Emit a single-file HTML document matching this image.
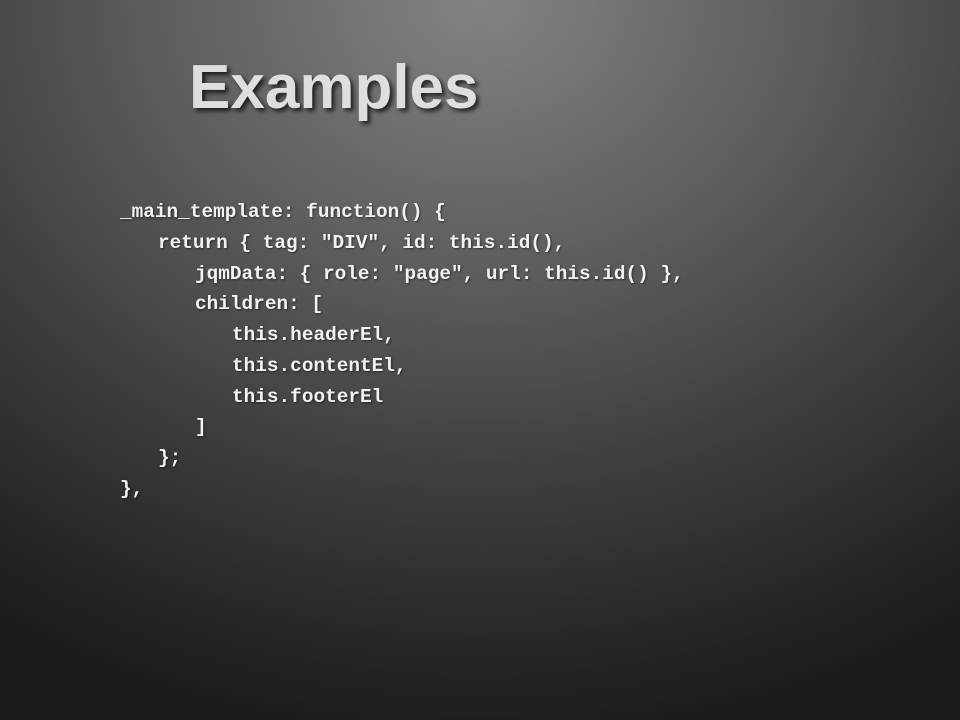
<!DOCTYPE html>
<html><head><meta charset="utf-8"><style>
html,body{margin:0;padding:0}
body{width:960px;height:720px;overflow:hidden;position:relative;
background:radial-gradient(ellipse 900px 760px at 480px 0px,#838383 0%,#5e5e5e 35%,#3c3c3c 65%,#222 90%,#1a1a1a 100%);}
h1{position:absolute;left:189px;top:50px;margin:0;font:bold 62px/76px "Liberation Sans",sans-serif;color:#dedede;
text-shadow:3px 3px 4px rgba(0,0,0,0.7)}
.c{position:absolute;left:120px;top:197px;margin:0;font:bold 19.4px/30.75px "Liberation Mono",monospace;color:#f2f2f2;
text-shadow:1px 1px 2px rgba(0,0,0,0.5);white-space:pre}
.i1{padding-left:38px}.i2{padding-left:75px}.i3{padding-left:112px}
</style></head><body>
<h1>Examples</h1>
<div class="c"><div>_main_template: function() {</div><div class="i1">return { tag: "DIV", id: this.id(),</div><div class="i2">jqmData: { role: "page", url: this.id() },</div><div class="i2">children: [</div><div class="i3">this.headerEl,</div><div class="i3">this.contentEl,</div><div class="i3">this.footerEl</div><div class="i2">]</div><div class="i1">};</div><div>},</div></div>
</body></html>
